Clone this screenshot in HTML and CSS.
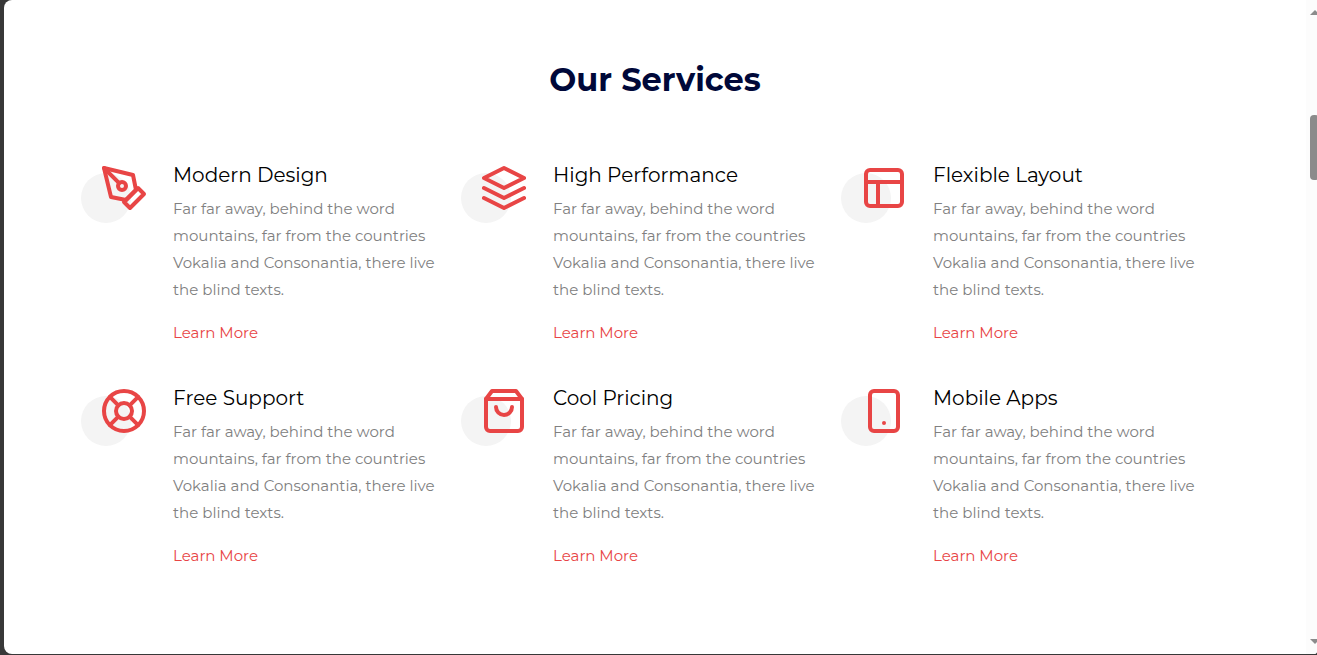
FILE: index.html
```
<!DOCTYPE html>
<html lang="en">
<head>
<meta charset="utf-8">
<meta name="viewport" content="width=device-width, initial-scale=1">
<title>Our Services</title>
<link rel="stylesheet" href="styles.css">
</head>
<body>
<div class="window">
  <main class="page">
    <h2 class="title">Our Services</h2>
    <div class="services">
      <article class="service">
        <div class="icon"><svg viewBox="0 0 24 24" aria-hidden="true"><path d="M12 19l7-7 3 3-7 7-3-3z"/><path d="M18 13l-1.5-7.5L2 2l3.500 14.500L13 18l5-5z"/><path d="M2 2l7.586 7.586"/><circle cx="11" cy="11" r="2"/></svg></div>
        <div class="body">
          <h3 class="name">Modern Design</h3>
          <p class="text">Far far away, behind the word mountains, far from the countries Vokalia and Consonantia, there live the blind texts.</p>
          <a class="more" href="#">Learn More</a>
        </div>
      </article>
      <article class="service">
        <div class="icon"><svg viewBox="0 0 24 24" aria-hidden="true"><path d="M12 2L2 7l10 5 10-5-10-5z"/><path d="M2 17l10 5 10-5"/><path d="M2 12l10 5 10-5"/></svg></div>
        <div class="body">
          <h3 class="name">High Performance</h3>
          <p class="text">Far far away, behind the word mountains, far from the countries Vokalia and Consonantia, there live the blind texts.</p>
          <a class="more" href="#">Learn More</a>
        </div>
      </article>
      <article class="service">
        <div class="icon"><svg viewBox="0 0 24 24" aria-hidden="true"><rect x="3" y="3" width="18" height="18" rx="2"/><path d="M3 9h18M9 21V9"/></svg></div>
        <div class="body">
          <h3 class="name">Flexible Layout</h3>
          <p class="text">Far far away, behind the word mountains, far from the countries Vokalia and Consonantia, there live the blind texts.</p>
          <a class="more" href="#">Learn More</a>
        </div>
      </article>
      <article class="service">
        <div class="icon"><svg viewBox="0 0 24 24" aria-hidden="true"><circle cx="12" cy="12" r="10"/><circle cx="12" cy="12" r="4"/><path d="M4.930 4.930l4.240 4.240M14.830 14.830l4.240 4.240M14.830 9.170l4.240-4.240M4.930 19.070l4.240-4.240"/></svg></div>
        <div class="body">
          <h3 class="name">Free Support</h3>
          <p class="text">Far far away, behind the word mountains, far from the countries Vokalia and Consonantia, there live the blind texts.</p>
          <a class="more" href="#">Learn More</a>
        </div>
      </article>
      <article class="service">
        <div class="icon"><svg viewBox="0 0 24 24" aria-hidden="true"><path d="M6 2L3 6v14a2 2 0 0 0 2 2h14a2 2 0 0 0 2-2V6l-3-4z"/><path d="M3 6h18"/><path d="M16 10a4 4 0 0 1-8 0"/></svg></div>
        <div class="body">
          <h3 class="name">Cool Pricing</h3>
          <p class="text">Far far away, behind the word mountains, far from the countries Vokalia and Consonantia, there live the blind texts.</p>
          <a class="more" href="#">Learn More</a>
        </div>
      </article>
      <article class="service">
        <div class="icon"><svg viewBox="0 0 24 24" aria-hidden="true"><rect x="5" y="2" width="14" height="20" rx="2"/><path d="M12 18h.01"/></svg></div>
        <div class="body">
          <h3 class="name">Mobile Apps</h3>
          <p class="text">Far far away, behind the word mountains, far from the countries Vokalia and Consonantia, there live the blind texts.</p>
          <a class="more" href="#">Learn More</a>
        </div>
      </article>
    </div>
  </main>
  <div class="scrollbar" aria-hidden="true">
    <span class="arrow arrow-up"></span>
    <span class="thumb"></span>
    <span class="arrow arrow-down"></span>
  </div>
</div>
</body>
</html>
```
FILE: styles.css
```
* {
  box-sizing: border-box;
}

body {
  margin: 0;
  padding: 0 0 1px 4px;
  min-height: 100vh;
  display: flex;
  background: #383838;
  font-family: Montserrat, Inter, "Open Sans", sans-serif;
  font-size: 15px;
  font-weight: 400;
  line-height: 27px;
  color: #808080;
}

.window {
  flex: 1;
  display: flex;
  overflow: hidden;
  border-radius: 8px 0 3px 8px;
  background: #fff;
}

.page {
  flex: 1;
  padding: 60px 15px;
}

.title {
  margin: 0 0 64px;
  font-size: 32px;
  font-weight: 700;
  line-height: 40px;
  text-align: center;
  color: #000839;
}

.services {
  display: grid;
  grid-template-columns: repeat(auto-fit, minmax(300px, 1fr));
  gap: 41px 30px;
  max-width: 1110px;
  margin: 0 auto;
}

.service {
  display: flex;
  gap: 25px;
}

.icon {
  position: relative;
  flex: none;
  width: 48px;
  height: 48px;
}

.icon::before {
  content: "";
  position: absolute;
  top: 9px;
  left: -19px;
  width: 50px;
  height: 50px;
  border-radius: 50%;
  background: #f4f4f4;
}

.icon svg {
  position: relative;
  display: block;
  width: 48px;
  height: 48px;
  fill: none;
  stroke: #e84545;
  stroke-width: 2;
  stroke-linecap: round;
  stroke-linejoin: round;
}

.name {
  margin: 0 0 9px;
  font-size: 20px;
  font-weight: 400;
  line-height: 22px;
  color: #000;
}

.text {
  margin: 0 0 16px;
}

.more {
  color: #e84545;
  text-decoration: none;
}

.scrollbar {
  flex: none;
  display: flex;
  flex-direction: column;
  width: 11px;
  padding: 10px 0 10px 4px;
  overflow: hidden;
  background: #fcfcfc;
}

.arrow {
  width: 10px;
  border: 5px solid transparent;
}

.arrow-up {
  border-top: 0;
  border-bottom-color: #8b8b8b;
}

.arrow-down {
  margin-top: auto;
  border-bottom: 0;
  border-top-color: #8b8b8b;
}

.thumb {
  flex: none;
  width: 9px;
  height: 65px;
  margin-top: 100px;
  border-radius: 4px;
  background: #8b8b8b;
}
```
